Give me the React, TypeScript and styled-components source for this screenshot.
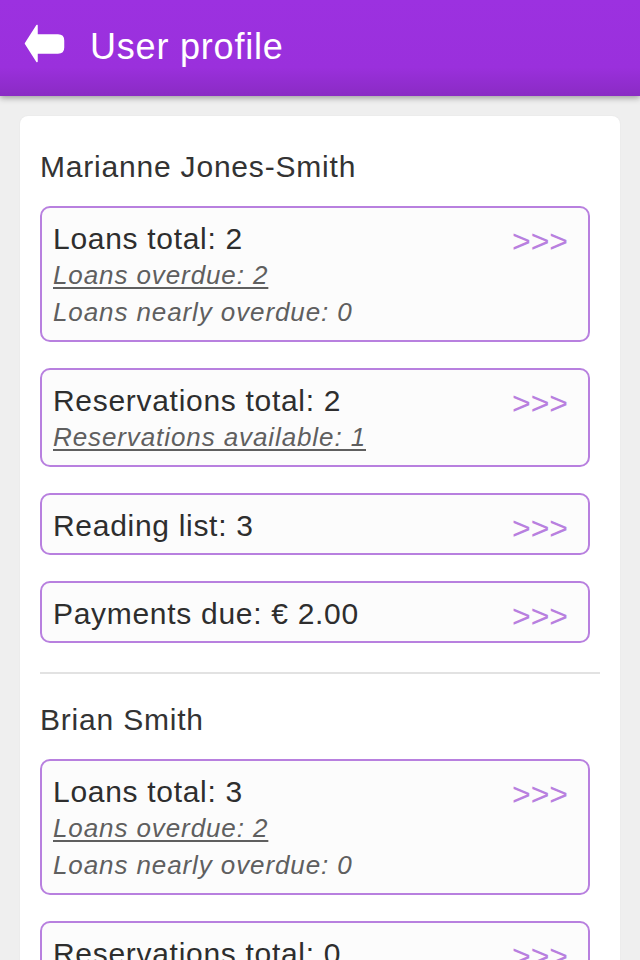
import React from 'react'
import styled, { createGlobalStyle } from 'styled-components'

const GlobalStyle = createGlobalStyle`
    body {
        margin: 0;
        background: #efefef;
        font-family: 'Liberation Sans', Arial, sans-serif;
    }
`

const Page = styled.div`
    min-height: 960px;
    background: #efefef;
`

const Header = styled.header`
    height: 96px;
    display: flex;
    align-items: center;
    padding-left: 24px;
    background: linear-gradient(to bottom, #9c31e0 0%, #9a30dc 70%, #8a2bc4 100%);
    box-shadow: 0 2px 6px rgba(0, 0, 0, 0.35);
    position: relative;
    z-index: 1;
`

const BackButton = styled.button`
    width: 42px;
    height: 40px;
    padding: 0;
    border: none;
    background: none;
    margin-right: 24px;
    margin-top: -8px;
    display: flex;
`

const Title = styled.h1`
    margin: 0;
    margin-top: -2px;
    color: #fff;
    font-size: 36px;
    letter-spacing: 0.8px;
    font-weight: normal;
`

const Card = styled.main`
    margin: 20px 20px 0;
    padding: 20px 20px 0;
    background: #fff;
    border-radius: 8px;
    box-shadow: 0 0 2px rgba(0, 0, 0, 0.06);
`

const Person = styled.section`
    & + & {
        border-top: 2px solid #e2e2e2;
        margin-top: 29px;
        padding-top: 27px;
    }
`

const Name = styled.h2<{ $first?: boolean }>`
    margin: 0;
    padding-top: ${(p) => (p.$first ? '12px' : '0')};
    height: 38px;
    line-height: 38px;
    font-size: 30px;
    letter-spacing: 0.8px;
    font-weight: normal;
    color: #333;
`

const List = styled.div`
    display: flex;
    flex-direction: column;
    gap: 26px;
    margin-top: 20px;
    margin-right: 10px;
`

const Tile = styled.a`
    display: flex;
    justify-content: space-between;
    align-items: flex-start;
    padding: 12px 20px 9px 11px;
    border: 2px solid #b880df;
    border-radius: 10px;
    background: #fcfcfc;
    text-decoration: none;
`

const Lines = styled.div`
    display: flex;
    flex-direction: column;
`

const Main = styled.span`
    font-size: 30px;
    line-height: 37px;
    letter-spacing: 0.7px;
    color: #2e2e2e;
`

const Sub = styled.span<{ $link?: boolean }>`
    font-size: 26px;
    line-height: 37px;
    letter-spacing: 0.9px;
    font-style: italic;
    color: #5f5f5f;
    text-decoration: ${(p) => (p.$link ? 'underline' : 'none')};
    text-underline-offset: 3px;
`

const More = styled.span`
    margin-top: 8px;
    font-size: 32px;
    line-height: 27px;
    color: #b880df;
`

type Row = { main: string; subs?: { text: string; link?: boolean }[] }

const people: { name: string; rows: Row[] }[] = [
    {
        name: 'Marianne Jones-Smith',
        rows: [
            {
                main: 'Loans total: 2',
                subs: [
                    { text: 'Loans overdue: 2', link: true },
                    { text: 'Loans nearly overdue: 0' },
                ],
            },
            {
                main: 'Reservations total: 2',
                subs: [{ text: 'Reservations available: 1', link: true }],
            },
            { main: 'Reading list: 3' },
            { main: 'Payments due: € 2.00' },
        ],
    },
    {
        name: 'Brian Smith',
        rows: [
            {
                main: 'Loans total: 3',
                subs: [
                    { text: 'Loans overdue: 2', link: true },
                    { text: 'Loans nearly overdue: 0' },
                ],
            },
            { main: 'Reservations total: 0' },
            { main: 'Reading list: 0' },
        ],
    },
]

const BackIcon = () => (
    <svg width="42" height="40" viewBox="0 0 42 40">
        <path
            d="M1.5 19.5 L13 1.5 L13 11 L34 11 Q39.5 11 39.5 16.5 L39.5 23.5 Q39.5 29 34 29 L13 29 L13 37.5 Z"
            fill="#fff"
            stroke="#fff"
            strokeWidth="1.5"
            strokeLinejoin="round"
        />
    </svg>
)

const App = () => {
    return (
        <Page>
            <GlobalStyle />
            <Header>
                <BackButton aria-label="Back">
                    <BackIcon />
                </BackButton>
                <Title>User profile</Title>
            </Header>
            <Card>
                {people.map((person, i) => (
                    <Person key={person.name}>
                        <Name $first={i === 0}>{person.name}</Name>
                        <List>
                            {person.rows.map((row) => (
                                <Tile key={row.main}>
                                    <Lines>
                                        <Main>{row.main}</Main>
                                        {row.subs?.map((s) => (
                                            <Sub key={s.text} $link={s.link}>
                                                {s.text}
                                            </Sub>
                                        ))}
                                    </Lines>
                                    <More>&gt;&gt;&gt;</More>
                                </Tile>
                            ))}
                        </List>
                    </Person>
                ))}
            </Card>
        </Page>
    )
}

export default App
